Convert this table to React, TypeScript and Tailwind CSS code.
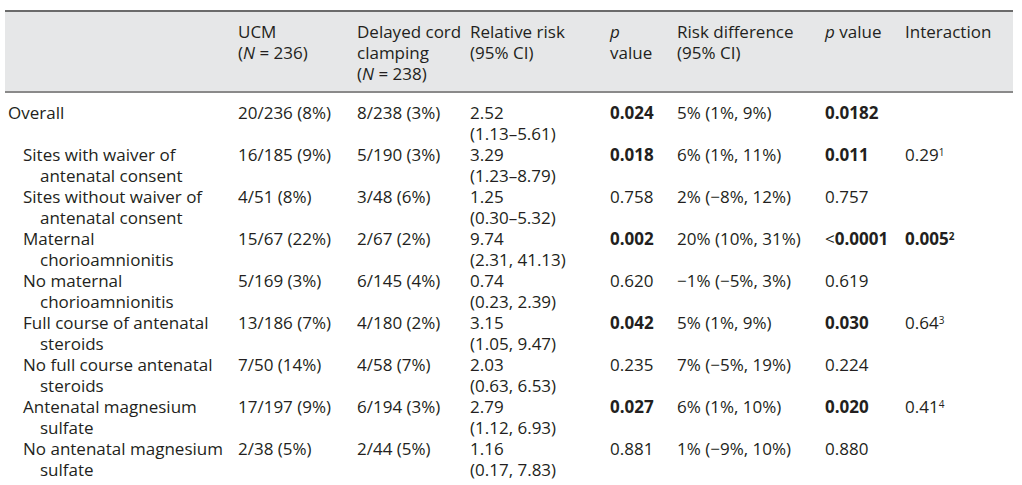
import React from "react";

type Row = {
  label: [string, string];
  sub: boolean;
  ucm: string;
  dcc: string;
  rr: [string, string];
  p1: string;
  p1Bold: boolean;
  rd: string;
  p2: React.ReactNode;
  inter?: React.ReactNode;
};

const rows: Row[] = [
  {
    label: ["Overall", ""],
    sub: false,
    ucm: "20/236 (8%)",
    dcc: "8/238 (3%)",
    rr: ["2.52", "(1.13–5.61)"],
    p1: "0.024",
    p1Bold: true,
    rd: "5% (1%, 9%)",
    p2: <b className="font-bold">0.0182</b>,
  },
  {
    label: ["Sites with waiver of", "antenatal consent"],
    sub: true,
    ucm: "16/185 (9%)",
    dcc: "5/190 (3%)",
    rr: ["3.29", "(1.23–8.79)"],
    p1: "0.018",
    p1Bold: true,
    rd: "6% (1%, 11%)",
    p2: <b className="font-bold">0.011</b>,
    inter: (
      <>
        0.29<sup className="text-[10px]">1</sup>
      </>
    ),
  },
  {
    label: ["Sites without waiver of", "antenatal consent"],
    sub: true,
    ucm: "4/51 (8%)",
    dcc: "3/48 (6%)",
    rr: ["1.25", "(0.30–5.32)"],
    p1: "0.758",
    p1Bold: false,
    rd: "2% (−8%, 12%)",
    p2: "0.757",
  },
  {
    label: ["Maternal", "chorioamnionitis"],
    sub: true,
    ucm: "15/67 (22%)",
    dcc: "2/67 (2%)",
    rr: ["9.74", "(2.31, 41.13)"],
    p1: "0.002",
    p1Bold: true,
    rd: "20% (10%, 31%)",
    p2: (
      <>
        &lt;<b className="font-bold">0.0001</b>
      </>
    ),
    inter: (
      <b className="font-bold">
        0.005<sup className="text-[10px]">2</sup>
      </b>
    ),
  },
  {
    label: ["No maternal", "chorioamnionitis"],
    sub: true,
    ucm: "5/169 (3%)",
    dcc: "6/145 (4%)",
    rr: ["0.74", "(0.23, 2.39)"],
    p1: "0.620",
    p1Bold: false,
    rd: "−1% (−5%, 3%)",
    p2: "0.619",
  },
  {
    label: ["Full course of antenatal", "steroids"],
    sub: true,
    ucm: "13/186 (7%)",
    dcc: "4/180 (2%)",
    rr: ["3.15", "(1.05, 9.47)"],
    p1: "0.042",
    p1Bold: true,
    rd: "5% (1%, 9%)",
    p2: <b className="font-bold">0.030</b>,
    inter: (
      <>
        0.64<sup className="text-[10px]">3</sup>
      </>
    ),
  },
  {
    label: ["No full course antenatal", "steroids"],
    sub: true,
    ucm: "7/50 (14%)",
    dcc: "4/58 (7%)",
    rr: ["2.03", "(0.63, 6.53)"],
    p1: "0.235",
    p1Bold: false,
    rd: "7% (−5%, 19%)",
    p2: "0.224",
  },
  {
    label: ["Antenatal magnesium", "sulfate"],
    sub: true,
    ucm: "17/197 (9%)",
    dcc: "6/194 (3%)",
    rr: ["2.79", "(1.12, 6.93)"],
    p1: "0.027",
    p1Bold: true,
    rd: "6% (1%, 10%)",
    p2: <b className="font-bold">0.020</b>,
    inter: (
      <>
        0.41<sup className="text-[10px]">4</sup>
      </>
    ),
  },
  {
    label: ["No antenatal magnesium", "sulfate"],
    sub: true,
    ucm: "2/38 (5%)",
    dcc: "2/44 (5%)",
    rr: ["1.16", "(0.17, 7.83)"],
    p1: "0.881",
    p1Bold: false,
    rd: "1% (−9%, 10%)",
    p2: "0.880",
  },
];

const cols =
  "grid grid-cols-[233px_119px_113px_140px_67px_148px_80px_108px]";

const App: React.FC = () => {
  return (
    <div className="min-h-screen bg-white pt-[10px] px-[5px] font-['Open_Sans',sans-serif] text-[17px] leading-[21px] text-[#231f20]">
      <div className="w-[1008px]">
        {/* Header */}
        <div
          className={`${cols} bg-[#e6e7e8] border-t-2 border-b-2 border-t-[#6b6b6b] border-b-[#8a8a8a] pt-[9px] pb-[7px]`}
        >
          <div />
          <div>
            UCM
            <br />(<i>N</i> = 236)
          </div>
          <div className="whitespace-nowrap">
            Delayed cord
            <br />
            clamping
            <br />(<i>N</i> = 238)
          </div>
          <div>
            Relative risk
            <br />
            (95% CI)
          </div>
          <div>
            <i>p</i>
            <br />
            value
          </div>
          <div>
            Risk difference
            <br />
            (95% CI)
          </div>
          <div>
            <i>p</i> value
          </div>
          <div>Interaction</div>
        </div>

        {/* Body */}
        <div className="pt-[9px]">
          {rows.map((r, i) => (
            <div key={i} className={`${cols} h-[42px]`}>
              <div className="whitespace-nowrap">
                <div className={r.sub ? "pl-[18px]" : "pl-[3px]"}>{r.label[0]}</div>
                {r.label[1] && <div className="pl-[35px]">{r.label[1]}</div>}
              </div>
              <div className="whitespace-nowrap">{r.ucm}</div>
              <div className="whitespace-nowrap">{r.dcc}</div>
              <div className="whitespace-nowrap">
                <div>{r.rr[0]}</div>
                <div>{r.rr[1]}</div>
              </div>
              <div className={r.p1Bold ? "font-bold" : ""}>{r.p1}</div>
              <div className="whitespace-nowrap">{r.rd}</div>
              <div className="whitespace-nowrap">{r.p2}</div>
              <div className="whitespace-nowrap">{r.inter}</div>
            </div>
          ))}
        </div>
      </div>
    </div>
  );
};

export default App;
